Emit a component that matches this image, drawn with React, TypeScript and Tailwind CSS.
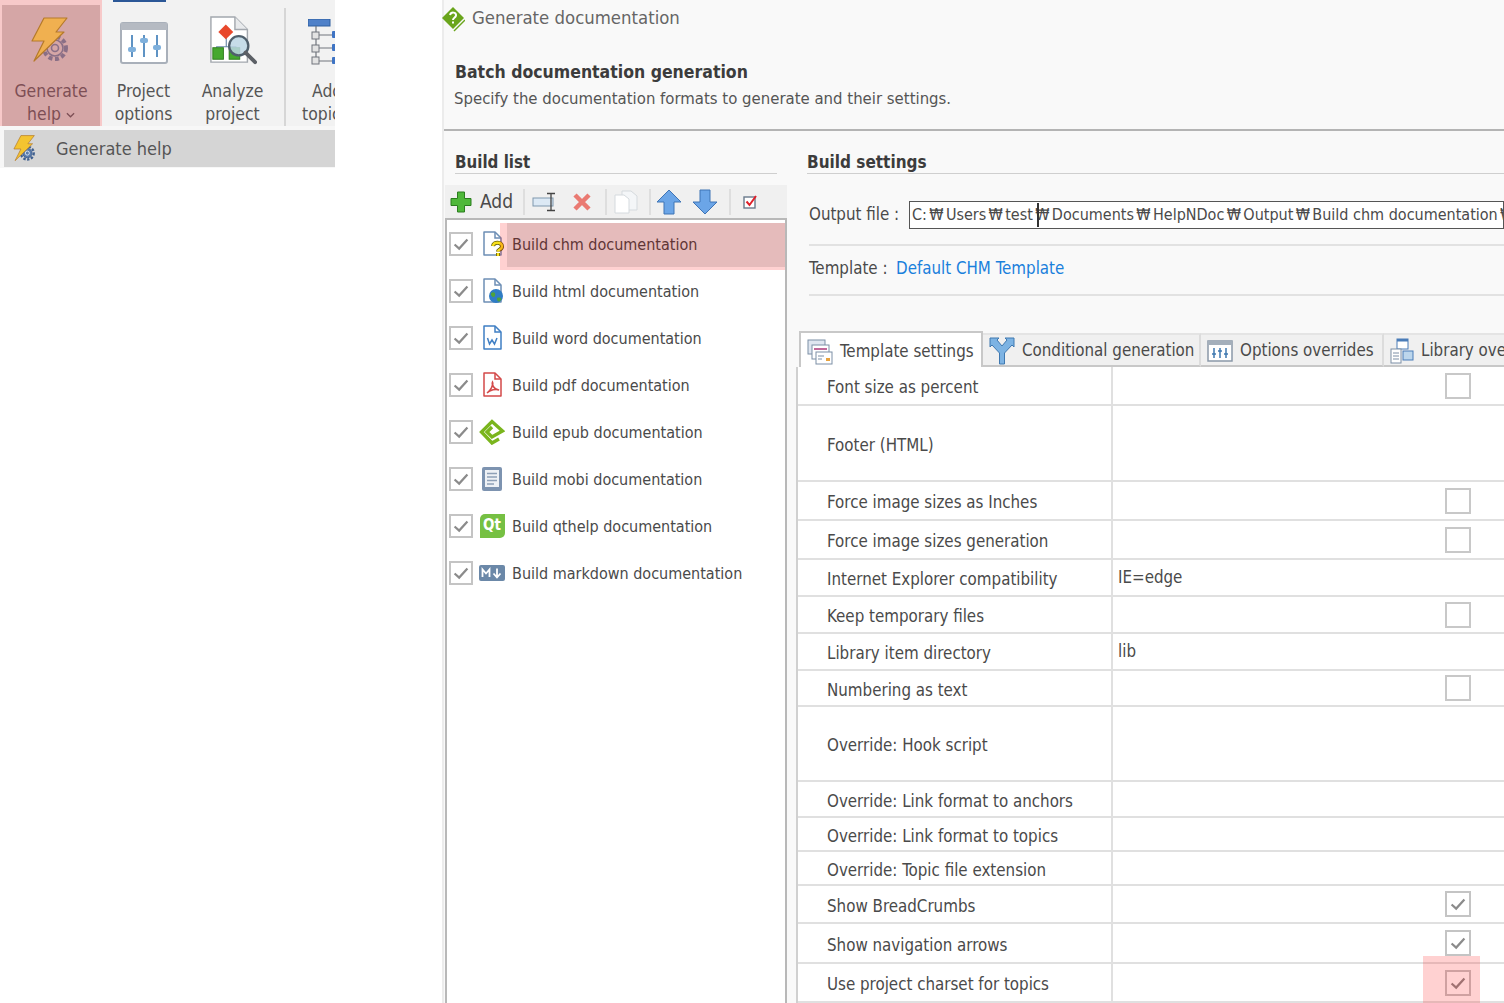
import React from 'react';

const FONT = '[font-family:"DejaVu_Sans_Condensed","DejaVu_Sans","Noto_Sans_CJK_KR",sans-serif]';

const OUTPUT_PATH = ['C:', 'Users', 'test', 'Documents', 'HelpNDoc', 'Output', 'Build chm documentation', ''];

const Bolt: React.FC<{ className?: string; dark?: boolean }> = ({ className, dark }) => (
    <svg viewBox="0 0 40 48" className={className}>
        <circle cx="24" cy="31" r="11" fill="none" stroke={dark ? '#3f5f8f' : '#8a6f86'} strokeWidth="4" strokeDasharray="4 2.6" />
        <circle cx="24" cy="31" r="8" fill={dark ? '#5b7cab' : 'none'} stroke={dark ? '#3f5f8f' : '#8a6f86'} strokeWidth="1.6" />
        <circle cx="24" cy="31" r="3.5" fill="none" stroke={dark ? '#dfe7f2' : '#8a6f86'} strokeWidth="1.6" />
        <path d="M13 1 H36 L25 15 H33 L3 44 L13 24 H1 Z" fill={dark ? '#f4c430' : '#f0b050'} stroke="#b57a2a" strokeWidth="1.2" strokeLinejoin="round" />
    </svg>
);

const SlidersWindow = () => (
    <svg viewBox="0 0 48 42" className="w-[48px] h-[42px]">
        <rect x="1" y="1" width="46" height="40" rx="2" fill="#fff" stroke="#a9b0ba" strokeWidth="2" />
        <rect x="1" y="1" width="46" height="7" fill="#b5bac2" />
        <path d="M12 13V35M24 13V35M37 13V35" stroke="#5f93c4" strokeWidth="2" />
        <rect x="8" y="25" width="8" height="5" rx="2" fill="#7fb0dc" />
        <rect x="20" y="16" width="8" height="5" rx="2" fill="#7fb0dc" />
        <rect x="33" y="23" width="8" height="5" rx="2" fill="#7fb0dc" />
    </svg>
);

const AnalyzeDoc = () => (
    <svg viewBox="0 0 50 52" className="w-[48px] h-[50px]">
        <path d="M2 1H27L40 14V48H2Z" fill="#fff" stroke="#a3a8ae" strokeWidth="1.5" />
        <path d="M27 1V14H40" fill="#e8eaec" stroke="#a3a8ae" strokeWidth="1.5" />
        <path d="M18 22V32H8V38M18 32H28V38" fill="none" stroke="#6a8aa8" strokeWidth="1.2" />
        <rect x="12" y="11" width="11" height="11" fill="#e8482c" transform="rotate(45 17.5 16.5)" />
        <rect x="4" y="33" width="11" height="12" fill="#45a82e" stroke="#2f7d1e" />
        <rect x="21" y="33" width="11" height="12" fill="#45a82e" stroke="#2f7d1e" />
        <circle cx="31" cy="31" r="10" fill="#bcd6e4" fillOpacity="0.85" stroke="#4f5f6c" strokeWidth="2.4" />
        <path d="M38 38L48 48" stroke="#5c6066" strokeWidth="4" strokeLinecap="round" />
    </svg>
);

const TopicTree = () => (
    <svg viewBox="0 0 36 46" className="w-[36px] h-[46px] shrink-0">
        <rect x="0" y="0" width="22" height="7" fill="#4f81c9" stroke="#2f5f9f" />
        <path d="M8 7V42M8 16H36M8 29H36M8 42H36" fill="none" stroke="#70757c" strokeWidth="1.2" />
        <rect x="4" y="13" width="7" height="7" fill="#e3e3e3" stroke="#70757c" />
        <rect x="4" y="26" width="7" height="7" fill="#e3e3e3" stroke="#70757c" />
        <rect x="4" y="38" width="7" height="7" fill="#e3e3e3" stroke="#70757c" />
        <rect x="24" y="12" width="12" height="7" rx="1" fill="#3f74c4" />
        <rect x="24" y="25" width="12" height="7" rx="1" fill="#3f74c4" />
        <rect x="24" y="38" width="12" height="7" rx="1" fill="#3f74c4" />
        <rect x="27" y="3" width="9" height="6" fill="#43a52f" />
    </svg>
);

const Check = ({ className }: { className: string }) => (
    <span className={`flex items-center justify-center border-2 border-[#c4c4c4] bg-white ${className}`}>
        <svg viewBox="0 0 24 24" className="w-[22px] h-[22px] shrink-0">
            <path d="M5 12.5L10 17L19 7" fill="none" stroke="#8b8b8b" strokeWidth="2.4" />
        </svg>
    </span>
);

const PageOutline: React.FC<{ color: string; children?: React.ReactNode }> = ({ color, children }) => (
    <svg viewBox="0 0 24 26" className="w-[24px] h-[26px]">
        <path d="M4 1H15L21 7V24H4Z" fill="#fff" stroke={color} strokeWidth="1.5" strokeLinejoin="round" />
        <path d="M15 1V7H21" fill="none" stroke={color} strokeWidth="1.5" />
        {children}
    </svg>
);

const BuildIcon: React.FC<{ kind: string }> = ({ kind }) => {
    switch (kind) {
        case 'chm':
            return (
                <PageOutline color="#6d8fb5">
                    <path d="M13 15C13.500 10.500 22 10.500 22 15.500C22 19 18 18 18 20.500M18 22V25" fill="none" stroke="#5c5608" strokeWidth="4" />
                    <path d="M13 15C13.500 10.500 22 10.500 22 15.500C22 19 18 18 18 20.500M18 22V25" fill="none" stroke="#f7e01c" strokeWidth="2.4" />
                </PageOutline>
            );
        case 'html':
            return (
                <PageOutline color="#6d8fb5">
                    <circle cx="16" cy="18" r="7" fill="#2f7cc4" />
                    <path d="M11 15C14 13 16 15 15 18C14 20 12 19 11 17ZM17 20C20 19 22 20 21 22C19 24.5 17 24 17 20Z" fill="#4ea33a" />
                </PageOutline>
            );
        case 'word':
            return (
                <PageOutline color="#3f7fc4">
                    <path d="M7.5 13L9.5 19L12 15L14.5 19L17 13" fill="none" stroke="#3f7fc4" strokeWidth="1.5" />
                </PageOutline>
            );
        case 'pdf':
            return (
                <PageOutline color="#d34a4a">
                    <path d="M7 21C10 19 14 13 12.5 10C11.5 12 14 18 19 18C16 16.5 10 18 7 21Z" fill="none" stroke="#d34a4a" strokeWidth="1.5" />
                </PageOutline>
            );
        case 'epub':
            return (
                <svg viewBox="0 0 26 26" className="w-[26px] h-[26px]">
                    <path d="M20 20L13 24L2.500 13L13 2.500L23.500 12L13 18L8 13L13 8" fill="none" stroke="#7ab51d" strokeWidth="3.4" />
                </svg>
            );
        case 'mobi':
            return (
                <svg viewBox="0 0 24 26" className="w-[24px] h-[26px]">
                    <rect x="2" y="1" width="20" height="24" rx="2" fill="#7d93b0" />
                    <rect x="5" y="4" width="14" height="17" fill="#eef1f5" />
                    <path d="M7 7.5H17M7 11H17M7 14.5H17M7 18H14" stroke="#8ea0b6" strokeWidth="1.4" />
                </svg>
            );
        case 'qt':
            return (
                <span className="flex items-center justify-center w-[25px] h-[24px] bg-[#76c043] rounded-tl-[5px] rounded-br-[5px] text-white text-[15px] font-bold">
                    Qt
                </span>
            );
        default:
            return (
                <svg viewBox="0 0 26 16" className="w-[26px] h-[16px]">
                    <rect x="0" y="0" width="26" height="16" rx="2" fill="#6b88a8" />
                    <path d="M3.5 12V4.5L7 8.5L10.5 4.5V12" fill="none" stroke="#fff" strokeWidth="1.8" />
                    <path d="M18 3.5V11M14.5 8.5L18 12.5L21.5 8.5" fill="none" stroke="#fff" strokeWidth="1.8" />
                </svg>
            );
    }
};

const RibbonButton: React.FC<{ width: string; pad: string; icon: React.ReactNode; lines: [string, string] }> = ({ width, pad, icon, lines }) => (
    <div className={`flex flex-col items-center shrink-0 ${width}`}>
        <div className={`h-[79px] flex items-end ${pad}`}>{icon}</div>
        <span className="h-[24px] leading-[24px] whitespace-nowrap">{lines[0]}</span>
        <span className="h-[23px] leading-[23px] whitespace-nowrap">{lines[1]}</span>
    </div>
);

const BUILDS = ['chm', 'html', 'word', 'pdf', 'epub', 'mobi', 'qthelp', 'markdown'];

const ICON_KIND: Record<string, string> = { qthelp: 'qt', markdown: 'md' };

type Row = { label: string; height: string; value?: string; check?: 'off' | 'on' | 'hit' };

const ROWS: Row[] = [
    { label: 'Font size as percent', height: 'h-[39px]', check: 'off' },
    { label: 'Footer (HTML)', height: 'h-[76px]' },
    { label: 'Force image sizes as Inches', height: 'h-[39px]', check: 'off' },
    { label: 'Force image sizes generation', height: 'h-[39px]', check: 'off' },
    { label: 'Internet Explorer compatibility', height: 'h-[37px]', value: 'IE=edge' },
    { label: 'Keep temporary files', height: 'h-[37px]', check: 'off' },
    { label: 'Library item directory', height: 'h-[37px]', value: 'lib' },
    { label: 'Numbering as text', height: 'h-[36px]', check: 'off' },
    { label: 'Override: Hook script', height: 'h-[75px]' },
    { label: 'Override: Link format to anchors', height: 'h-[36px]' },
    { label: 'Override: Link format to topics', height: 'h-[34px]' },
    { label: 'Override: Topic file extension', height: 'h-[34px]' },
    { label: 'Show BreadCrumbs', height: 'h-[38px]', check: 'on' },
    { label: 'Show navigation arrows', height: 'h-[40px]', check: 'on' },
    { label: 'Use project charset for topics', height: 'h-[39px]', check: 'hit' },
];

const Tab: React.FC<{ width: string; active?: boolean; icon: React.ReactNode; label: string }> = ({ width, active, icon, label }) => (
    <div className={`flex items-center gap-[7px] shrink-0 pl-[6px] whitespace-nowrap overflow-hidden ${width} ${active ? 'h-[36px] pt-[3px] bg-white border-t-2 border-x-2 border-[#c8c8c8]' : 'h-[34px] pt-[1px] bg-[#f0f0f0] border-t-2 border-r-2 border-b-2 border-t-[#e4e4e4] border-r-[#dcdcdc] border-b-[#c8c8c8]'}`}>
        {icon}
        <span>{label}</span>
    </div>
);

const Divider = ({ className }: { className: string }) => <span className={`w-[2px] h-[26px] bg-[#dedede] shrink-0 ${className}`} />;

export default function App() {
    return (
        <div className={`flex w-[1504px] h-[1003px] overflow-hidden bg-white text-[#4a4a4a] text-[16.8px] ${FONT}`}>
            {/* ribbon crop */}
            <div className="w-[335px] h-[168px] flex flex-col shrink-0 overflow-hidden bg-[#f7f7f7] text-[17.4px]">
                <div className="relative flex h-[126px] bg-[#f2f2f2] text-[#555]">
                    <span className="absolute left-[113px] top-0 w-[53px] h-[2px] bg-[#2b5797]" />
                    <div className="relative w-[102px] shrink-0 bg-[#f7c9c9] pt-[5px] px-[2px]">
                        <div className="flex flex-col items-center h-[121px] bg-[#d5a6a6] text-[#7d4f55]">
                            <div className="h-[74px] flex items-end pb-[14px]">
                                <Bolt className="w-[40px] h-[48px]" />
                            </div>
                            <span className="h-[24px] leading-[24px]">Generate</span>
                            <span className="h-[23px] leading-[23px] flex items-center gap-[5px]">
                                help
                                <svg viewBox="0 0 10 6" className="w-[9px] h-[6px]">
                                    <path d="M1 1L5 5L9 1" fill="none" stroke="#7d4f55" strokeWidth="1.4" />
                                </svg>
                            </span>
                        </div>
                    </div>
                    <RibbonButton width="w-[83px]" pad="pb-[15px]" icon={<SlidersWindow />} lines={['Project', 'options']} />
                    <RibbonButton width="w-[95px]" pad="pb-[13px]" icon={<AnalyzeDoc />} lines={['Analyze', 'project']} />
                    <span className="w-[2px] h-[118px] mt-[8px] ml-[4px] bg-[#d6d6d6] shrink-0" />
                    <div className="flex flex-col shrink-0 pl-[16px]">
                        <div className="h-[79px] flex items-end pb-[14px] pl-[6px]">
                            <TopicTree />
                        </div>
                        <span className="h-[24px] leading-[24px] pl-[10px]">Add</span>
                        <span className="h-[23px] leading-[23px]">topic</span>
                    </div>
                </div>
                <div className="flex items-center h-[37px] mt-[4px] ml-[4px] bg-[#d5d5d5] text-[#555] text-[18px]">
                    <Bolt dark className="w-[24px] h-[28px] ml-[9px]" />
                    <span className="ml-[19px]">Generate help</span>
                </div>
            </div>

            {/* dialog crop */}
            <div className="ml-[107px] w-[1062px] shrink-0 h-full flex flex-col bg-[#f9f9f9] border-l-2 border-[#ececec]">
                <div className="h-[129px] shrink-0">
                    <div className="flex items-center h-[36px]">
                        <svg viewBox="0 0 24 28" className="w-[24px] h-[28px] shrink-0 -ml-[3px]">
                            <path d="M12 3L23 14L12 25L1 14Z" fill="#6aa51c" />
                            <path d="M13 27L24 16" stroke="#6aa51c" strokeWidth="1.5" />
                            <path d="M9 11C10 7.5 15.5 8 15 11.5C14.6 14 12 13.5 12 16M12 17.5V19.5" fill="none" stroke="#fff" strokeWidth="2" />
                        </svg>
                        <span className="ml-[7px] text-[18.4px] text-[#666]">Generate documentation</span>
                    </div>
                    <div className="mt-[24px] ml-[11px] font-bold leading-[24px] text-[17.5px] text-[#3c3c3c]">Batch documentation generation</div>
                    <div className="mt-[3px] ml-[10px] leading-[24px] text-[16.6px] text-[#555]">Specify the documentation formats to generate and their settings.</div>
                </div>
                <div className="h-[2px] bg-[#b4b4b4] shrink-0" />
                <div className="flex flex-1 min-h-0">
                    {/* build list */}
                    <div className="w-[343px] shrink-0 flex flex-col pl-[1px] text-[16px]">
                        <div className="mx-[10px] mt-[20px] h-[22px] leading-[22px] text-[16.8px] font-bold text-[#3c3c3c]">Build list</div>
                        <div className="mx-[10px] h-[1px] bg-[#cfcfcf]" />
                        <div className="flex items-center h-[33px] mt-[11px] bg-[#f0f0f0] pl-[5px] shrink-0">
                            <svg viewBox="0 0 22 22" className="w-[22px] h-[22px] shrink-0">
                                <path d="M7.5 1H14.500V7.500H21V14.500H14.500V21H7.500V14.500H1V7.500H7.500Z" fill="#4fb83a" stroke="#2b7d1e" />
                            </svg>
                            <span className="w-[35px] ml-[8px] text-[19px] whitespace-nowrap">Add</span>
                            <Divider className="ml-[8px]" />
                            <svg viewBox="0 0 26 20" className="w-[26px] h-[20px] shrink-0 ml-[7px]">
                                <rect x="1" y="6" width="20" height="8" fill="#dce9f5" stroke="#7f97ad" />
                                <path d="M19 2V18M15 1.500H23M15 18.500H23" stroke="#444" strokeWidth="1.3" fill="none" />
                            </svg>
                            <svg viewBox="0 0 20 20" className="w-[20px] h-[20px] shrink-0 ml-[14px]">
                                <path d="M3 3L17 17M17 3L3 17" stroke="#ea7a72" strokeWidth="4.5" />
                            </svg>
                            <Divider className="ml-[13px]" />
                            <svg viewBox="0 0 26 24" className="w-[26px] h-[24px] shrink-0 ml-[6px]">
                                <path d="M9 1H18L24 6V20H9Z" fill="#f4f6f8" stroke="#d5dade" />
                                <path d="M2 5H11L16 9V23H2Z" fill="#fff" stroke="#d5dade" />
                            </svg>
                            <Divider className="ml-[10px]" />
                            <svg viewBox="0 0 26 26" className="w-[26px] h-[26px] shrink-0 ml-[5px]">
                                <path d="M13 1L25 13H18V25H8V13H1Z" fill="#6ba5e7" stroke="#3f74b5" />
                            </svg>
                            <svg viewBox="0 0 26 26" className="w-[26px] h-[26px] shrink-0 ml-[10px]">
                                <path d="M13 25L25 13H18V1H8V13H1Z" fill="#6ba5e7" stroke="#3f74b5" />
                            </svg>
                            <Divider className="ml-[11px]" />
                            <svg viewBox="0 0 16 16" className="w-[16px] h-[16px] ml-[11px] shrink-0">
                                <rect x="2" y="3" width="11" height="11" fill="#fff" stroke="#6a7a8c" strokeWidth="1.4" />
                                <path d="M4.500 7.500L7.500 11L14 2" fill="none" stroke="#e0202a" strokeWidth="2" />
                            </svg>
                        </div>
                        <div className="flex-1 bg-white border-2 border-b-0 border-[#b8b8b8] pl-[2px]">
                            {BUILDS.map((b, i) => (
                                <div key={b} className="relative flex items-center h-[47px]">
                                    <Check className="w-[24px] h-[24px] shrink-0" />
                                    <span className="w-[39px] flex justify-center shrink-0 pr-[1px]">
                                        <BuildIcon kind={ICON_KIND[b] || b} />
                                    </span>
                                    <span className="whitespace-nowrap pt-[2px]">Build {b} documentation</span>
                                    {i === 0 && (
                                        <>
                                            <span className="absolute left-[51px] top-[3px] right-0 h-[47px] bg-[#ff0000]/[0.18]" />
                                            <span className="absolute left-[58px] top-[3px] right-0 h-[44px] bg-black/10" />
                                        </>
                                    )}
                                </div>
                            ))}
                        </div>
                    </div>

                    {/* build settings */}
                    <div className="flex-1 min-w-0 flex flex-col overflow-hidden pl-[20px]">
                        <div className="mt-[20px] h-[22px] leading-[22px] font-bold text-[17px] text-[#3c3c3c]">Build settings</div>
                        <div className="h-[1px] bg-[#cfcfcf]" />
                        <div className="flex items-center h-[28px] mt-[27px] pl-[2px] shrink-0">
                            <span className="w-[100px] shrink-0 whitespace-nowrap">Output file :</span>
                            <div className="relative flex-1 min-w-0 h-[28px] leading-[26px] text-[16px] bg-white border border-[#555] pl-[2px] overflow-hidden whitespace-nowrap">
                                {OUTPUT_PATH.map((part, i) => (
                                    <React.Fragment key={i}>
                                        {part}
                                        {i < OUTPUT_PATH.length - 1 && <span className="inline-block w-[19px] text-center">₩</span>}
                                    </React.Fragment>
                                ))}
                                <span className="absolute left-[127px] top-[1px] w-[2px] h-[24px] bg-[#333]" />
                            </div>
                        </div>
                        <div className="h-[2px] ml-[2px] mt-[15px] bg-[#e2e2e2] shrink-0" />
                        <div className="flex items-center h-[48px] pl-[2px] pb-[3px] shrink-0">
                            <span className="w-[87px] shrink-0 whitespace-nowrap">Template :</span>
                            <span className="text-[#1a80dc]">Default CHM Template</span>
                        </div>
                        <div className="h-[2px] ml-[2px] bg-[#e2e2e2] shrink-0" />
                        <div className="flex items-end h-[36px] mt-[35px] -ml-[8px] shrink-0 overflow-hidden">
                            <Tab width="w-[184px]" active label="Template settings" icon={
                                <svg viewBox="0 0 26 26" className="w-[26px] h-[26px] shrink-0">
                                    <rect x="1" y="1" width="17" height="14" fill="#dfe6f0" stroke="#7d8fa6" />
                                    <rect x="5" y="6" width="17" height="14" fill="#fff" stroke="#7d8fa6" />
                                    <path d="M7 10H20" stroke="#c0689a" strokeWidth="2" />
                                    <rect x="9" y="13" width="16" height="12" fill="#fff" stroke="#7d8fa6" />
                                    <path d="M11 17H17M11 20H15" stroke="#7d8fa6" />
                                    <rect x="19" y="19" width="4" height="3" fill="#e8a23c" />
                                </svg>
                            } />
                            <Tab width="w-[218px]" label="Conditional generation" icon={
                                <svg viewBox="0 0 26 28" className="w-[26px] h-[28px] shrink-0">
                                    <path d="M10.500 27V16L3 8L1 10V1H10L8 3L13 9L18 3L16 1H25V10L23 8L15.500 16V27Z" fill="#7db3e3" stroke="#3f78b0" />
                                </svg>
                            } />
                            <Tab width="w-[183px]" label="Options overrides" icon={
                                <svg viewBox="0 0 26 24" className="w-[26px] h-[24px] shrink-0">
                                    <rect x="1" y="2" width="24" height="20" fill="#fff" stroke="#8a98a8" strokeWidth="1.5" />
                                    <rect x="1" y="2" width="24" height="4" fill="#a4afbb" />
                                    <path d="M7 9V19M13 9V19M19 9V19" stroke="#3f78b0" strokeWidth="1.5" />
                                    <path d="M5 15H9M11 12H15M17 15H21" stroke="#3f78b0" strokeWidth="1.5" />
                                </svg>
                            } />
                            <Tab width="w-[130px]" label="Library overrides" icon={
                                <svg viewBox="0 0 24 26" className="w-[24px] h-[26px] shrink-0">
                                    <rect x="7" y="1" width="11" height="10" fill="#fff" stroke="#4a7cb8" />
                                    <rect x="7" y="1" width="11" height="2.500" fill="#4a7cb8" />
                                    <rect x="1" y="11" width="10" height="14" fill="#fff" stroke="#7d8fa6" />
                                    <rect x="13" y="13" width="10" height="9" fill="#bcd6ec" stroke="#4a7cb8" />
                                    <path d="M3 15H9M3 18H9M3 21H9" stroke="#7d8fa6" />
                                </svg>
                            } />
                        </div>
                        <div className="-ml-[11px] flex-1 bg-white border-l-2 border-[#d0d0d0]">
                            {ROWS.map(r => (
                                <div key={r.label} className={`flex ${r.height} border-b-2 border-[#e0e0e0]`}>
                                    <div className="w-[315px] shrink-0 flex items-center pl-[29px] pt-[5px] border-r-2 border-[#e0e0e0] whitespace-nowrap">{r.label}</div>
                                    <div className="relative flex-1 flex items-center justify-between pl-[5px] pr-[33px]">
                                        <span>{r.value}</span>
                                        {r.check === 'off' && <span className="w-[26px] h-[26px] border-2 border-[#c8c8c8] bg-white" />}
                                        {(r.check === 'on' || r.check === 'hit') && <Check className="w-[26px] h-[26px]" />}
                                        {r.check === 'hit' && <span className="absolute right-[24px] -top-[8px] w-[57px] h-[48px] bg-[#ff0000]/[0.18]" />}
                                    </div>
                                </div>
                            ))}
                        </div>
                    </div>
                </div>
            </div>
        </div>
    );
}
